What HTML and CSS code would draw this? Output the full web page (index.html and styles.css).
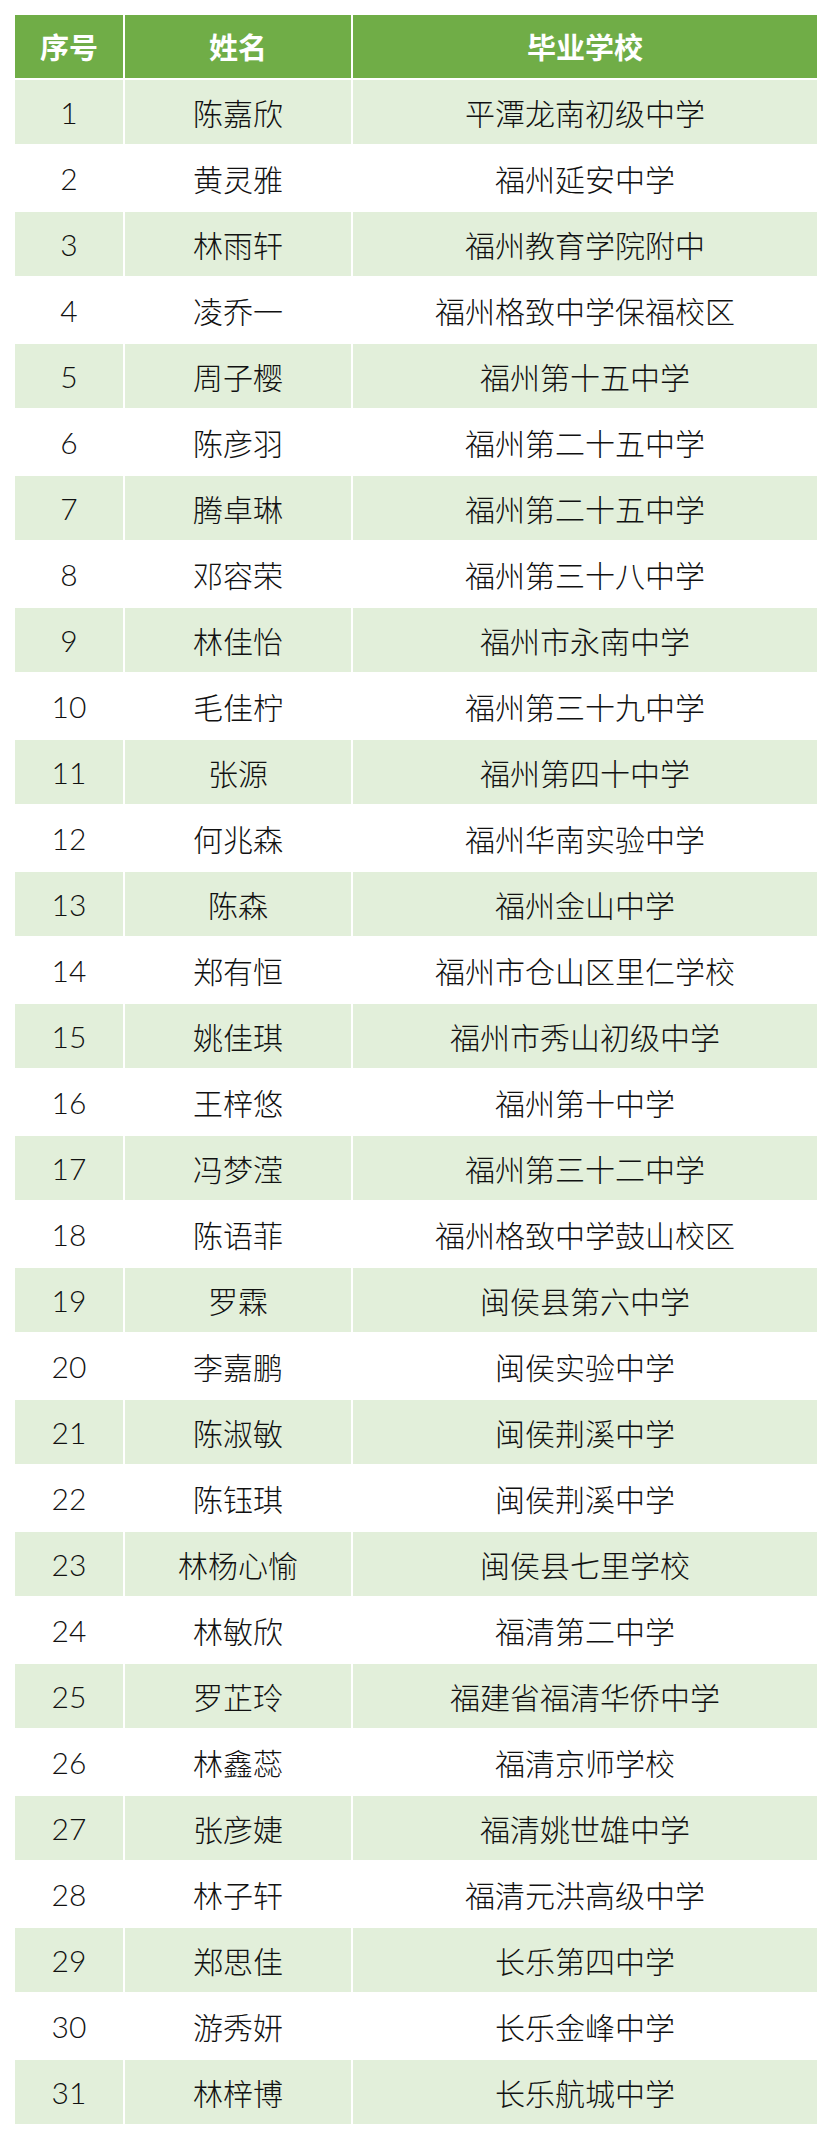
FILE: index.html
```html
<!DOCTYPE html>
<html lang="zh-CN">
<head>
<meta charset="utf-8">
<title>名单</title>
<link rel="stylesheet" href="styles.css">
</head>
<body>
<div class="sheet">
  <div class="row head"><div class="c">序号</div><div class="c">姓名</div><div class="c">毕业学校</div></div>
  <div class="row odd"><div class="c num">1</div><div class="c">陈嘉欣</div><div class="c">平潭龙南初级中学</div></div>
  <div class="row"><div class="c num">2</div><div class="c">黄灵雅</div><div class="c">福州延安中学</div></div>
  <div class="row odd"><div class="c num">3</div><div class="c">林雨轩</div><div class="c">福州教育学院附中</div></div>
  <div class="row"><div class="c num">4</div><div class="c">凌乔一</div><div class="c">福州格致中学保福校区</div></div>
  <div class="row odd"><div class="c num">5</div><div class="c">周子樱</div><div class="c">福州第十五中学</div></div>
  <div class="row"><div class="c num">6</div><div class="c">陈彦羽</div><div class="c">福州第二十五中学</div></div>
  <div class="row odd"><div class="c num">7</div><div class="c">腾卓琳</div><div class="c">福州第二十五中学</div></div>
  <div class="row"><div class="c num">8</div><div class="c">邓容荣</div><div class="c">福州第三十八中学</div></div>
  <div class="row odd"><div class="c num">9</div><div class="c">林佳怡</div><div class="c">福州市永南中学</div></div>
  <div class="row"><div class="c num">10</div><div class="c">毛佳柠</div><div class="c">福州第三十九中学</div></div>
  <div class="row odd"><div class="c num">11</div><div class="c">张源</div><div class="c">福州第四十中学</div></div>
  <div class="row"><div class="c num">12</div><div class="c">何兆森</div><div class="c">福州华南实验中学</div></div>
  <div class="row odd"><div class="c num">13</div><div class="c">陈森</div><div class="c">福州金山中学</div></div>
  <div class="row"><div class="c num">14</div><div class="c">郑有恒</div><div class="c">福州市仓山区里仁学校</div></div>
  <div class="row odd"><div class="c num">15</div><div class="c">姚佳琪</div><div class="c">福州市秀山初级中学</div></div>
  <div class="row"><div class="c num">16</div><div class="c">王梓悠</div><div class="c">福州第十中学</div></div>
  <div class="row odd"><div class="c num">17</div><div class="c">冯梦滢</div><div class="c">福州第三十二中学</div></div>
  <div class="row"><div class="c num">18</div><div class="c">陈语菲</div><div class="c">福州格致中学鼓山校区</div></div>
  <div class="row odd"><div class="c num">19</div><div class="c">罗霖</div><div class="c">闽侯县第六中学</div></div>
  <div class="row"><div class="c num">20</div><div class="c">李嘉鹏</div><div class="c">闽侯实验中学</div></div>
  <div class="row odd"><div class="c num">21</div><div class="c">陈淑敏</div><div class="c">闽侯荆溪中学</div></div>
  <div class="row"><div class="c num">22</div><div class="c">陈钰琪</div><div class="c">闽侯荆溪中学</div></div>
  <div class="row odd"><div class="c num">23</div><div class="c">林杨心愉</div><div class="c">闽侯县七里学校</div></div>
  <div class="row"><div class="c num">24</div><div class="c">林敏欣</div><div class="c">福清第二中学</div></div>
  <div class="row odd"><div class="c num">25</div><div class="c">罗芷玲</div><div class="c">福建省福清华侨中学</div></div>
  <div class="row"><div class="c num">26</div><div class="c">林鑫蕊</div><div class="c">福清京师学校</div></div>
  <div class="row odd"><div class="c num">27</div><div class="c">张彦婕</div><div class="c">福清姚世雄中学</div></div>
  <div class="row"><div class="c num">28</div><div class="c">林子轩</div><div class="c">福清元洪高级中学</div></div>
  <div class="row odd"><div class="c num">29</div><div class="c">郑思佳</div><div class="c">长乐第四中学</div></div>
  <div class="row"><div class="c num">30</div><div class="c">游秀妍</div><div class="c">长乐金峰中学</div></div>
  <div class="row odd"><div class="c num">31</div><div class="c">林梓博</div><div class="c">长乐航城中学</div></div>
</div>
</body>
</html>
```
FILE: styles.css
```css
html, body {
  margin: 0;
  padding: 0;
  background: #ffffff;
}
body {
  padding: 15px;
  font-family: "Noto Sans CJK SC", "Noto Sans", sans-serif;
  color: #111111;
}
.sheet {
  display: flex;
  flex-direction: column;
  gap: 2px;
  width: 802px;
}
.row {
  display: grid;
  grid-template-columns: 108px 226px 464px;
  column-gap: 2px;
  height: 64px;
}
.row.head {
  height: 63px;
}
.c {
  display: flex;
  align-items: center;
  justify-content: center;
  font-size: 30px;
  font-weight: 300;
  line-height: 1;
  white-space: nowrap;
}
.row.odd .c {
  background: #e2efda;
}
.row.head .c {
  background: #70ad47;
  color: #ffffff;
  font-weight: 700;
  font-size: 29px;
}
.c.num {
  font-family: "Lato", sans-serif;
  font-weight: 300;
  font-size: 30px;
}
```
